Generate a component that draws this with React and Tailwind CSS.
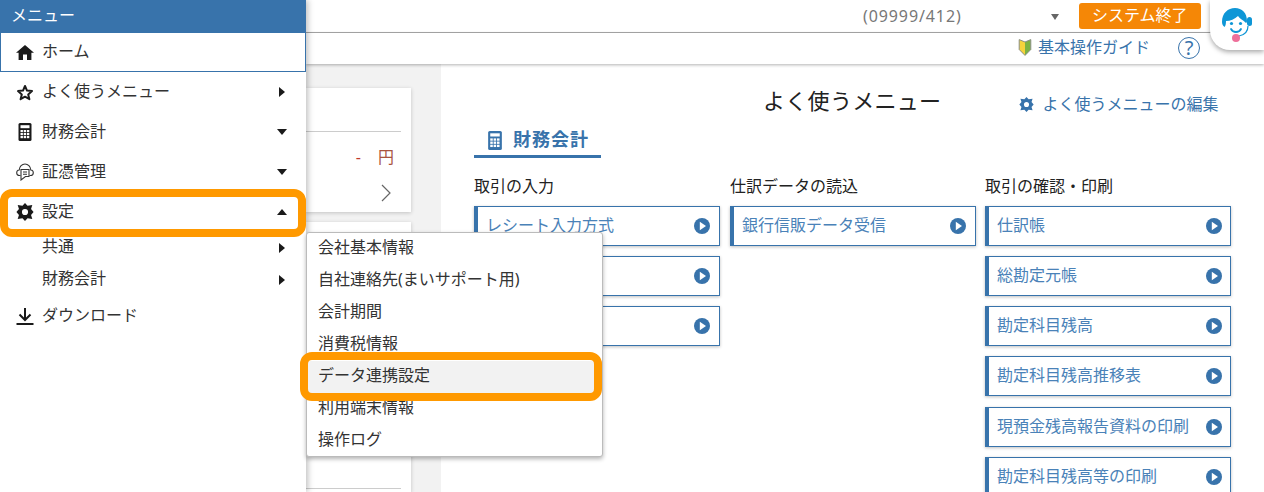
import React from 'react';

const FONT = "font-['Noto_Sans','Noto_Sans_CJK_JP',sans-serif]";

function Home() {
  return (
    <svg width="18" height="15" viewBox="0 0 18 15" className="fill-[#1a1a1a]">
      <path d="M9 0 L18 7.8 H15.4 V15 H11 V9.6 H7 V15 H2.6 V7.8 H0 Z" />
    </svg>
  );
}

function Star() {
  return (
    <svg width="18" height="17" viewBox="0 0 18 17" className="fill-none stroke-[#1a1a1a]" strokeWidth="2">
      <path d="M9 2 L11 6.6 L16 7.1 L12.2 10.4 L13.4 15.2 L9 12.7 L4.6 15.2 L5.8 10.4 L2 7.1 L7 6.6 Z" strokeLinejoin="round" />
    </svg>
  );
}

function Calc({ color = '#1a1a1a', w = 14, h = 18 }) {
  return (
    <svg width={w} height={h} viewBox="0 0 13 18">
      <rect x="0" y="0" width="13" height="18" rx="1.5" fill={color} />
      <rect x="2" y="2.2" width="9" height="3" fill="#fff" />
      {[7, 10, 13].map((y) =>
        [2, 5.2, 8.4].map((x) => <rect key={`${x}-${y}`} x={x} y={y} width="2.4" height="2.2" fill="#fff" />)
      )}
    </svg>
  );
}

function CloudDoc() {
  return (
    <svg width="18" height="18" viewBox="0 0 18 18" fill="none" stroke="#333" strokeWidth="1.1">
      <path d="M4.5 12.5 H3.6 C1.8 12.5 .7 11.2 .7 9.7 C.7 8.2 1.8 7.1 3.2 7 C3.5 3.6 6 1 9 1 C12 1 14.5 3.6 14.8 7 C16.2 7.1 17.3 8.2 17.3 9.7 C17.3 11.2 16.2 12.5 14.4 12.5 H13.5" />
      <path d="M5 6.5 H13 V13.5 L9.5 13.5 L5 17 Z" fill="#fff" />
      <path d="M7 9 H11 M7 11.2 H11" />
    </svg>
  );
}

function Gear({ color = '#1a1a1a', size = 18 }) {
  return (
    <svg width={size} height={size} viewBox="0 0 17 17">
      <path
        fillRule="evenodd"
        fill={color}
        d="M8.5 0 L10.9 2.6 L15.4 2 L14.2 5.6 L16.6 8.5 L14.2 11.4 L15.4 15 L10.9 14.4 L8.5 17 L6.1 14.4 L1.6 15 L2.8 11.4 L.4 8.5 L2.8 5.6 L1.6 2 L6.1 2.6 Z M8.5 5.6 A2.9 2.9 0 1 0 8.5 11.4 A2.9 2.9 0 1 0 8.5 5.6 Z"
      />
    </svg>
  );
}

function Download() {
  return (
    <svg width="18" height="18" viewBox="0 0 18 18" fill="none" stroke="#1a1a1a" strokeWidth="2">
      <path d="M9 1 V12.5 M3.5 7.5 L9 13 L14.5 7.5 M.5 17 H17.5" />
    </svg>
  );
}

function Caret({ dir }) {
  const d = { right: 'M2 0 L8 5 L2 10 Z', down: 'M0 2 H10 L5 8 Z', up: 'M0 8 H10 L5 2 Z' }[dir];
  return (
    <svg width="10" height="10" viewBox="0 0 10 10" className="fill-[#1a1a1a]">
      <path d={d} />
    </svg>
  );
}

function PlayCircle() {
  return (
    <svg width="16" height="16" viewBox="0 0 16 16" className="shrink-0">
      <circle cx="8" cy="8" r="8" fill="#3873ab" />
      <path d="M5.8 3.8 L12 8 L5.8 12.2 Z" fill="#fff" />
    </svg>
  );
}

function Beginner() {
  return (
    <svg width="14" height="17" viewBox="0 0 14 17">
      <path d="M7 3 L12.8 .6 V10.5 L7 16.4 Z" fill="#7cb342" />
      <path d="M7 3 L1.2 .6 V10.5 L7 16.4 Z" fill="#f5d33c" />
      <path d="M7 3 L1.2 .6 V10.5 L7 16.4 L12.8 10.5 V.6 Z" fill="none" stroke="#8a8f86" strokeWidth="1" />
    </svg>
  );
}

function Avatar() {
  return (
    <svg width="32" height="36" viewBox="0 0 32 36">
      <path d="M1 15 C1 6 7 1 14 1 C21 1 26 6 26 14 C26 15 25.5 16 25 16 C22 13 19 12 17 9 C14 12 9 14 5 14 C5 17 4.5 19 3.5 20 C2 19 1 17 1 15 Z" fill="#0e96d6" />
      <rect x="26" y="10" width="5" height="9" rx="2.5" fill="#0e96d6" />
      <circle cx="10.5" cy="16.5" r="1.6" fill="#0e96d6" />
      <circle cx="19.5" cy="16.5" r="1.6" fill="#0e96d6" />
      <path d="M10 22 C12 26 18 26 20 22" fill="none" stroke="#0e96d6" strokeWidth="1.8" strokeLinecap="round" />
      <path d="M27 19 C27 25 23 28 18 29" fill="none" stroke="#0e96d6" strokeWidth="1.2" />
      <circle cx="15" cy="31" r="4" fill="#ee6f9a" />
    </svg>
  );
}

function Highlight({ className }) {
  return <div className={`absolute border-[8px] border-[#ff9900] rounded-[12px] pointer-events-none ${className}`} />;
}

function SideItem({ icon, label, caret, inner = false }) {
  return (
    <div className={`flex items-center pr-[19px] text-base text-[#333] ${inner ? 'h-8 pl-[42px]' : 'h-10 pl-[16px]'}`}>
      {!inner && <span className="w-[18px] flex justify-center mr-[8px]">{icon}</span>}
      <span className={`flex-1 ${inner ? 'pb-[4px]' : 'pb-[2px]'}`}>{label}</span>
      {caret && <Caret dir={caret} />}
    </div>
  );
}

function Sidebar() {
  return (
    <aside className="relative z-10 w-[306px] shrink-0 bg-white shadow-[2px_0_6px_rgba(0,0,0,0.25)]">
      <div className="h-[33px] bg-[#3873ab] text-white text-base leading-[31px] pl-[11px]">メニュー</div>
      <div className="h-[39px] flex items-center pl-[15px] text-base text-[#333] border border-[#3873ab] border-t-0">
        <span className="w-[18px] flex justify-center mr-[8px]"><Home /></span>
        <span className="pb-[2px]">ホーム</span>
      </div>
      <div>
        <SideItem icon={<Star />} label="よく使うメニュー" caret="right" />
        <SideItem icon={<Calc />} label="財務会計" caret="down" />
        <SideItem icon={<CloudDoc />} label="証憑管理" caret="down" />
        <div className="relative">
          <SideItem icon={<Gear />} label="設定" caret="up" />
          <Highlight className="left-0 right-0 top-[-3px] bottom-[-5px]" />
        </div>
        <div>
          <SideItem inner label="共通" caret="right" />
          <SideItem inner label="財務会計" caret="right" />
        </div>
        <SideItem icon={<Download />} label="ダウンロード" />
      </div>
    </aside>
  );
}

function TopBar() {
  return (
    <>
      <div className="h-[33px] bg-white border-b border-[#aaa] flex items-center text-base shrink-0">
        <span className="ml-[557px] tracking-[0.9px] text-[#777]">(09999/412)</span>
        <svg width="8" height="6" viewBox="0 0 8 6" className="ml-[89px] mt-[1px] fill-[#666]">
          <path d="M0 0 H8 L4 6 Z" />
        </svg>
        <span className="ml-[20px] w-[122px] h-[26px] rounded-[3px] bg-[#f58706] text-white text-center leading-[24px]">システム終了</span>
      </div>
      <div className="relative h-[31px] pb-[2px] bg-white shadow-[0_1px_3px_rgba(0,0,0,0.3)] flex items-center text-base text-[#3873ab] shrink-0">
        <span className="ml-[712px] mr-[6px] flex"><Beginner /></span>
        <span className="pb-[2px]">基本操作ガイド</span>
        <span className="ml-[28px] w-[22px] h-[22px] rounded-full border-[1.5px] border-[#3873ab] flex items-center justify-center text-[20px] leading-none">?</span>
      </div>
    </>
  );
}

function Cards() {
  return (
    <div className="w-[135px] shrink-0 pr-[30px] pt-[24px] flex flex-col gap-[10px]">
      <div className="h-[124px] bg-white shadow-[0_1px_4px_rgba(0,0,0,0.2)] pr-[10px] flex flex-col">
        <div className="h-[44px] shrink-0 border-b border-[#ccc]" />
        <div className="flex justify-end pr-[7px] gap-[17px] text-base leading-[20px] mt-[15px] text-[#a9543e]">
          <span className="text-[#c0392b]">-</span>
          <span>円</span>
        </div>
        <div className="flex justify-end pr-[10px] mt-[17px]">
          <svg width="10" height="18" viewBox="0 0 10 18" fill="none" stroke="#666" strokeWidth="1.2">
            <path d="M1 1 L9 9 L1 17" />
          </svg>
        </div>
      </div>
      <div className="flex-1 bg-white shadow-[0_1px_4px_rgba(0,0,0,0.2)] pr-[10px]">
        <div className="h-[267px] border-b border-[#ccc]" />
      </div>
    </div>
  );
}

function LinkBox({ label, tight }) {
  return (
    <div className={`h-10 flex items-center justify-between bg-white border border-[#3873ab] border-l-[4px] pl-[8px] text-base text-[#4a82b8] shadow-[0_1px_3px_rgba(0,0,0,0.25)] ${tight ? 'pr-[8px]' : 'pr-[9px]'}`}>
      <span className="pb-[2px]">{label}</span>
      <PlayCircle />
    </div>
  );
}

const columns = [
  { title: '取引の入力', items: ['レシート入力方式', '', ''] },
  { title: '仕訳データの読込', items: ['銀行信販データ受信'] },
  {
    title: '取引の確認・印刷',
    items: ['仕訳帳', '総勘定元帳', '勘定科目残高', '勘定科目残高推移表', '現預金残高報告資料の印刷', '勘定科目残高等の印刷'],
    shift: true,
  },
];

function Panel() {
  return (
    <div className="flex-1 bg-white pl-[33px] overflow-hidden">
      <div className="flex items-center h-[73px]">
        <span className="ml-[289px] mb-[1px] text-[22px] tracking-[0.3px] leading-none text-[#222]">よく使うメニュー</span>
        <span className="ml-[78px] mt-[7px] flex items-center text-base text-[#3873ab]">
          <span className="flex mr-[8px]"><Gear color="#3873ab" size={15} /></span>
          よく使うメニューの編集
        </span>
      </div>
      <div className="w-[127px] h-[33px] border-b-[3px] border-[#3873ab] -mt-[12px] flex items-center pl-[14px]">
        <span className="flex mr-[11px]"><Calc color="#3873ab" w={14} h={19} /></span>
        <span className="text-[18px] leading-none font-bold tracking-[1px] text-[#3873ab] pb-[2px]">財務会計</span>
      </div>
      <div className="flex gap-[10px] mt-[18px]">
        {columns.map((col) => (
          <div key={col.title} className={`w-[246px] ${col.shift ? '-ml-px' : ''}`}>
            <div className="h-[20px] leading-[20px] text-base text-[#222]">{col.title}</div>
            <div className="flex flex-col gap-[10.15px] mt-[10px]">
              {col.items.map((item, i) => (
                <LinkBox key={i} label={item} tight={col.shift} />
              ))}
            </div>
          </div>
        ))}
      </div>
    </div>
  );
}

const popupItems = ['会社基本情報', '自社連絡先(まいサポート用)', '会計期間', '消費税情報', 'データ連携設定', '利用端末情報', '操作ログ'];

export default function App() {
  return (
    <div className={`relative w-[1264px] h-[492px] overflow-hidden flex ${FONT}`}>
      <Sidebar />
      <main className="flex-1 flex flex-col min-w-0 bg-[#f2f2f2]">
        <TopBar />
        <div className="flex-1 flex min-h-0">
          <Cards />
          <Panel />
        </div>
      </main>

      {/* help avatar tab */}
      <div className="absolute z-10 right-0 top-0 w-[54px] h-[50px] bg-white rounded-bl-[20px] shadow-[0_2px_5px_rgba(0,0,0,0.35)] flex items-center justify-center">
        <Avatar />
      </div>

      {/* settings flyout */}
      <div className="absolute z-20 left-[306px] top-[232px] w-[297px] h-[225px] bg-white border border-[#bbb] rounded-[3px] shadow-[0_2px_4px_rgba(0,0,0,0.3)]">
        {popupItems.map((item, i) => (
          <div key={item} className={`h-8 leading-[28px] pl-[11px] text-base text-[#333] ${i === 4 ? 'bg-[#f2f2f2]' : ''}`}>
            {item}
          </div>
        ))}
      </div>
      <Highlight className="z-30 left-[300px] top-[352px] w-[302px] h-[49px]" />
    </div>
  );
}
